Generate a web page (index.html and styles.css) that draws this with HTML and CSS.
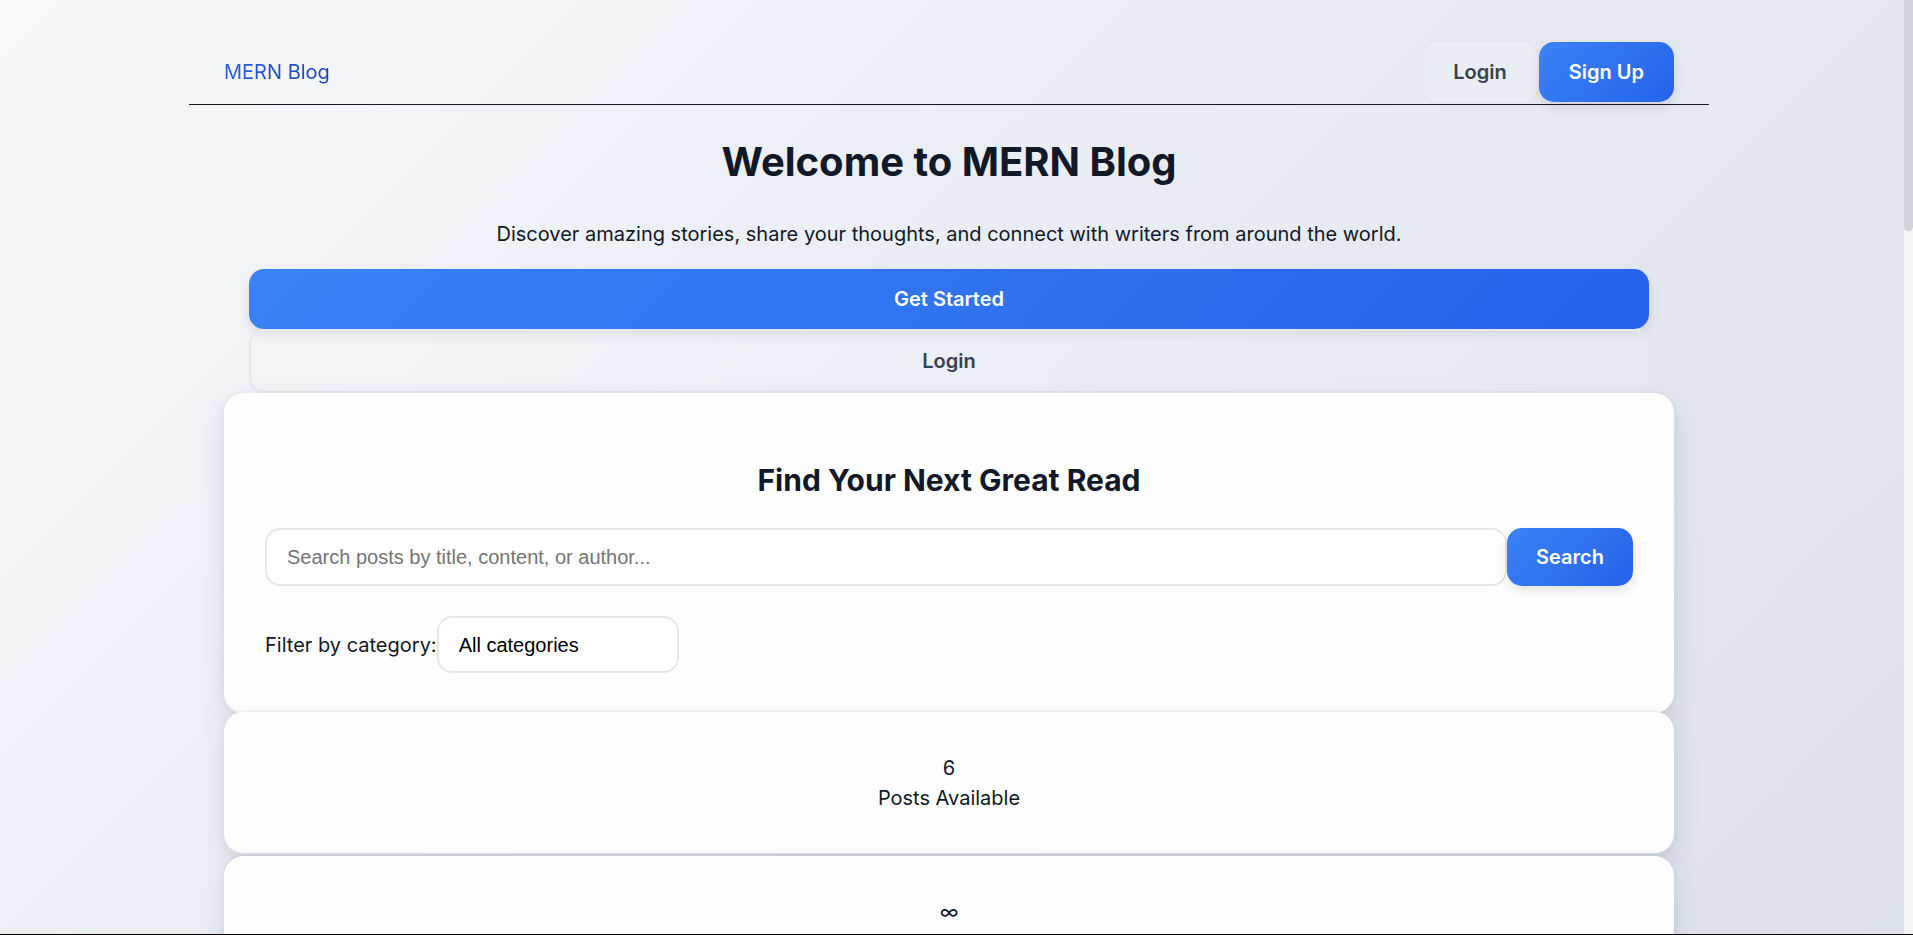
FILE: index.html
```html
<!DOCTYPE html>
<html lang="en">
<head>
<meta charset="utf-8">
<title>MERN Blog</title>
<link rel="stylesheet" href="styles.css">
</head>
<body>
<div class="page">
  <header class="header">
    <a class="logo" href="#">MERN Blog</a>
    <nav class="nav">
      <a class="btn btn-outline" href="#">Login</a>
      <a class="btn btn-primary" href="#">Sign Up</a>
    </nav>
  </header>
  <main class="main">
    <section class="hero">
      <h1 class="hero-title">Welcome to MERN Blog</h1>
      <p class="hero-text">Discover amazing stories, share your thoughts, and connect with writers from around the world.</p>
      <a class="btn btn-primary" href="#">Get Started</a>
      <a class="btn btn-outline" href="#">Login</a>
    </section>
    <section class="card">
      <h2 class="card-title">Find Your Next Great Read</h2>
      <form class="search">
        <input class="field search-input" type="text" aria-label="Search posts" placeholder="Search posts by title, content, or author...">
        <button class="btn btn-primary btn-search" type="button">Search</button>
      </form>
      <div class="filter">
        <label for="category">Filter by category:</label>
        <select class="field select" id="category">
          <option>All categories</option>
        </select>
      </div>
    </section>
    <section class="stats">
      <div class="card stat"><div>6</div><div>Posts Available</div></div>
      <div class="card stat"><div>∞</div></div>
    </section>
  </main>
</div>
<div class="scrollbar"><div class="thumb"></div></div>
<div class="bottom-line"></div>
</body>
</html>
```
FILE: styles.css
```css
* {
  box-sizing: border-box;
}

html {
  height: 100%;
  overflow: hidden;
}

body {
  margin: 0;
  height: 100%;
  overflow: hidden;
  font-family: Inter, sans-serif;
  font-size: 20px;
  line-height: 30px;
  color: #111827;
  background: linear-gradient(135deg, #f7f9fb 0%, #eff2f7 24%, #e5e9f2 60%, #dbe1ed 100%);
}

.page {
  max-width: 1535px;
  margin: 0 auto;
  padding-right: 15px;
}

.header {
  display: flex;
  justify-content: space-between;
  align-items: center;
  padding: 40px 35px 0;
  border-bottom: 1px solid #111827;
}

.logo {
  text-decoration: none;
  color: transparent;
  background: linear-gradient(135deg, #2563eb, #1e40af);
  background-clip: text;
  -webkit-background-clip: text;
}

.nav {
  display: flex;
  align-items: center;
}

.btn {
  display: block;
  padding: 15px 30px;
  border: 0;
  border-radius: 15px;
  font-family: inherit;
  font-size: 20px;
  line-height: 30px;
  font-weight: 600;
  text-align: center;
  text-decoration: none;
}

.btn-primary {
  color: #fff;
  background: linear-gradient(135deg, #3b82f6, #2563eb);
  box-shadow: 0 5px 12px rgba(0, 0, 0, 0.1);
}

.btn-outline {
  color: #374151;
  background: rgba(255, 255, 255, 0.15);
  border: 2px solid #e5e7eb;
}

.main {
  padding: 0 35px;
}

.hero {
  padding: 27px 25px 0;
  text-align: center;
}

.hero-title {
  margin: 0 0 27px;
  font-size: 40px;
  line-height: 60px;
}

.hero-text {
  margin: 0 0 20px;
}

.card {
  padding: 40px 41px;
  border-radius: 20px;
  background: #fefefe;
  box-shadow: 0 10px 28px rgba(30, 40, 70, 0.1), 0 3px 8px rgba(30, 40, 70, 0.06);
}

.card-title {
  margin: 25px 0;
  font-size: 30px;
  line-height: 45px;
  text-align: center;
}

.search {
  display: flex;
  margin-bottom: 30px;
}

.field {
  font-family: "Liberation Sans", Arial, sans-serif;
  font-size: 20px;
  border: 2px solid #e5e7eb;
  border-radius: 15px;
  background: #fff;
  color: #000;
}

.search-input {
  flex: 1;
  min-width: 0;
  height: 58px;
  padding: 0 20px;
}

.search-input::placeholder {
  color: #757575;
}

.btn-search {
  padding: 0 29px;
}

.filter {
  display: flex;
  align-items: center;
}

.select {
  width: 242px;
  height: 57px;
  padding: 0 20px;
  appearance: none;
}

.stats {
  display: flex;
  flex-direction: column;
  gap: 1px;
  margin-top: -2px;
}

.stat {
  min-height: 143px;
  padding-top: 41px;
  border-top: 1px solid #e8eaee;
  border-bottom: 1px solid #e2e4ea;
  text-align: center;
}

.stat + .stat {
  border-top-color: #c9cdd7;
}

.scrollbar {
  position: fixed;
  top: 0;
  right: 0;
  bottom: 0;
  width: 9px;
  background: #f3f4f6;
}

.thumb {
  height: 231px;
  border-radius: 0 0 5px 5px;
  background: #d1d3da;
}

.bottom-line {
  position: fixed;
  left: 0;
  right: 0;
  bottom: 0;
  height: 1px;
  background: #000;
}
```
